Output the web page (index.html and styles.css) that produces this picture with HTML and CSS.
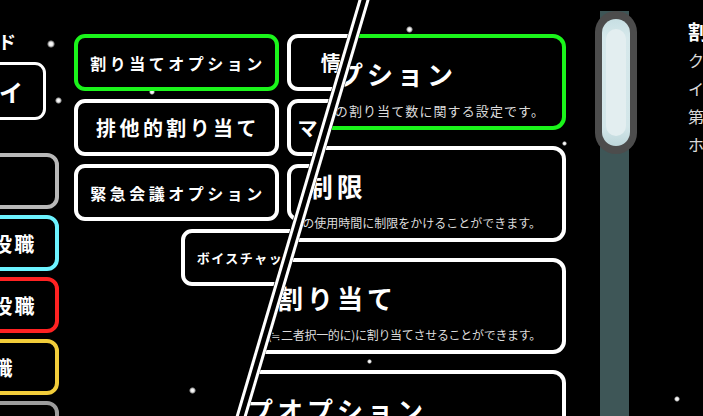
FILE: index.html
```html
<!DOCTYPE html>
<html lang="ja">
<head>
<meta charset="utf-8">
<title>オプション</title>
<link rel="stylesheet" href="styles.css">
</head>
<body>
<div class="stage">
  <div class="stars">
    <span class="star s1"></span>
    <span class="star s2"></span>
    <span class="star s3"></span>
    <span class="star s4"></span>
    <span class="star s5"></span>
    <span class="star s6"></span>
    <span class="star s7"></span>
    <span class="star s8"></span>
  </div>

  <div class="screen screen-left">
    <div class="side">
      <div class="side-title">ゲームモード</div>
      <div class="mode-box">フリープレイ</div>
      <div class="role-list">
        <div class="role role-gray">全般</div>
        <div class="role role-cyan">クルー陣営役職</div>
        <div class="role role-red">インポ陣営役職</div>
        <div class="role role-yellow">第三陣営職</div>
        <div class="role role-gray2">全般</div>
      </div>
    </div>
    <div class="menu-grid">
      <div class="menu-btn is-active txt-md">割り当てオプション</div>
      <div class="menu-btn txt-lg">情報表示設定</div>
      <div class="menu-btn txt-lg">排他的割り当て</div>
      <div class="menu-btn txt-lg">マップオプション</div>
      <div class="menu-btn txt-md">緊急会議オプション</div>
      <div class="menu-btn txt-md">タスクオプション</div>
      <div class="menu-btn txt-sm">ボイスチャットオプション</div>
    </div>
  </div>

  <div class="screen screen-right">
    <div class="cards">
      <div class="card is-active">
        <div class="card-title">割り当てオプション</div>
        <div class="card-sub sub-wide">役職の割り当て数に関する設定です。</div>
      </div>
      <div class="card">
        <div class="card-title">チャット制限</div>
        <div class="card-sub">チャットの使用時間に制限をかけることができます。</div>
      </div>
      <div class="card">
        <div class="card-title">排他的割り当て</div>
        <div class="card-sub sub-tight">役職を(≒二者択一的に)に割り当てさせることができます。</div>
      </div>
      <div class="card">
        <div class="card-title">マップオプション</div>
        <div class="card-sub">マップに関する設定です。</div>
      </div>
    </div>
    <div class="scroll">
      <div class="knob"><div class="knob-inner"><div class="knob-shine"></div></div></div>
    </div>
    <div class="info">
      <div class="info-title">割り当てオプション</div>
      <div class="info-line">クルーメイトの役職の数</div>
      <div class="info-line">インポスターの役職の数</div>
      <div class="info-line">第三陣営の役職の数</div>
      <div class="info-line">ホストの役職の設定</div>
    </div>
  </div>

  <svg class="divider" width="703" height="416" viewBox="0 0 703 416">
    <line x1="360.6" y1="-2" x2="236.7" y2="418" stroke="#fff" stroke-width="3"/>
    <line x1="368.6" y1="-2" x2="244.7" y2="418" stroke="#fff" stroke-width="3"/>
  </svg>
</div>
</body>
</html>
```

FILE: styles.css
```css
* { box-sizing: border-box; }

html, body {
  margin: 0;
  padding: 0;
  background: #000;
}

body {
  font-family: "Noto Sans CJK JP", "Noto Sans", sans-serif;
  color: #fff;
}

.stage {
  position: relative;
  width: 703px;
  height: 416px;
  overflow: hidden;
  background: #000;
}

/* stars on the free background canvas */
.stars {
  position: absolute;
  inset: 0;
}
.star {
  position: absolute;
  width: 7px;
  height: 7px;
  border-radius: 50%;
  background: radial-gradient(circle, #fff 0, #e8e8e8 35%, rgba(200,200,200,0.6) 55%, rgba(255,255,255,0) 72%);
}
.s1 { left: 47px; top: 40px; width: 8px; height: 8px; }
.s2 { left: 55px; top: 97px; }
.s3 { left: 149px; top: 89px; width: 6px; height: 6px; }
.s4 { left: 189px; top: 387px; }
.s5 { left: 406px; top: 26px; }
.s6 { left: 367px; top: 359px; width: 5px; height: 5px; }
.s7 { left: 562px; top: 141px; width: 5px; height: 5px; }
.s8 { left: 674px; top: 396px; width: 6px; height: 6px; }

/* two overlapping screens of the slide transition */
.screen {
  position: absolute;
  inset: 0;
  display: flex;
  align-items: flex-start;
}
.screen-left {
  clip-path: polygon(0 0, 358px 0, 235px 416px, 0 416px);
}
.screen-right {
  clip-path: polygon(370px 0, 703px 0, 703px 416px, 247px 416px);
}

.divider {
  position: absolute;
  left: 0;
  top: 0;
}

/* left screen */
.side {
  margin-left: -140px;
  width: 199px;
  flex: none;
  display: flex;
  flex-direction: column;
}
.side-title {
  margin-top: 30px;
  height: 22px;
  line-height: 22px;
  font-size: 18px;
  font-weight: 700;
  text-align: right;
  padding-right: 42px;
  letter-spacing: 1px;
}
.mode-box {
  margin-top: 10px;
  width: 186px;
  height: 58px;
  border: 3px solid #fff;
  border-radius: 11px;
  display: flex;
  align-items: center;
  justify-content: flex-end;
  padding-right: 20px;
  font-size: 24px;
  font-weight: 700;
}
.role-list {
  margin-top: 33px;
  display: flex;
  flex-direction: column;
  gap: 6px;
}
.role {
  height: 56px;
  border: 4px solid #fff;
  border-radius: 12px;
  display: flex;
  align-items: center;
  justify-content: center;
  font-size: 20px;
  font-weight: 700;
  letter-spacing: 2px;
  background: #000;
}
.role-gray { border-color: #b8b8b8; }
.role-cyan { border-color: #6cf3ff; }
.role-red { border-color: #ff2222; }
.role-yellow { border-color: #f2cd3a; }
.role-gray2 { border-color: #9c9c9c; }

.menu-grid {
  margin-left: 15px;
  margin-top: 34px;
  width: 418px;
  flex: none;
  display: flex;
  flex-wrap: wrap;
  justify-content: center;
  gap: 8px;
}
.menu-btn {
  width: 205px;
  height: 57px;
  border: 4px solid #fff;
  border-radius: 11px;
  background: #000;
  display: flex;
  align-items: center;
  justify-content: center;
  font-weight: 700;
  white-space: nowrap;
}
.menu-btn.is-active { border-color: #1bf51b; }
.txt-md { font-size: 16px; letter-spacing: 3.5px; padding-left: 3px; }
.txt-lg { font-size: 20px; letter-spacing: 3.4px; padding-left: 3px; }
.txt-sm { font-size: 13px; letter-spacing: 1.5px; padding-left: 1px; }

/* right screen */
.cards {
  margin-left: 166px;
  margin-top: 34px;
  width: 400px;
  flex: none;
  display: flex;
  flex-direction: column;
  gap: 16px;
}
.card {
  height: 96px;
  border: 4px solid #fff;
  border-radius: 13px;
  background: #000;
  padding: 21px 21px 0 17px;
  display: flex;
  flex-direction: column;
  white-space: nowrap;
}
.card.is-active { border-color: #1bf51b; }
.card-title {
  height: 30px;
  line-height: 30px;
  font-size: 26px;
  font-weight: 700;
  letter-spacing: 4px;
}
.card-sub {
  margin-top: 14px;
  height: 16px;
  line-height: 16px;
  font-size: 12px;
  color: #dcdcdc;
  text-align: right;
  letter-spacing: 0;
}
.card-sub.sub-wide { font-size: 13px; letter-spacing: 1.1px; margin-right: -4px; }
.card-sub.sub-tight { letter-spacing: -0.3px; }

.scroll {
  margin-left: 29px;
  margin-top: 11px;
  width: 42px;
  height: 420px;
  flex: none;
  background: linear-gradient(to right, transparent 5px, #3e5657 5px, #3e5657 34px, transparent 34px);
}
.knob {
  width: 42px;
  height: 143px;
  border-radius: 21px;
  background: #4c4c4c;
  padding: 8px 7px;
}
.knob-inner {
  height: 100%;
  border-radius: 14px;
  background: linear-gradient(to bottom, #c7dfe3, #d6e8eb 15%, #d3e6e9 85%, #bdd6da);
  padding: 10px 4px;
}
.knob-shine {
  height: 100%;
  border-radius: 10px;
  background: #e3eef0;
}

.info {
  margin-left: 51px;
  margin-top: 18px;
  flex: none;
  white-space: nowrap;
}
.info-title {
  height: 28px;
  line-height: 28px;
  font-size: 20px;
  font-weight: 700;
}
.info-line {
  height: 28px;
  line-height: 28px;
  font-size: 16px;
  color: #dadada;
}
```
